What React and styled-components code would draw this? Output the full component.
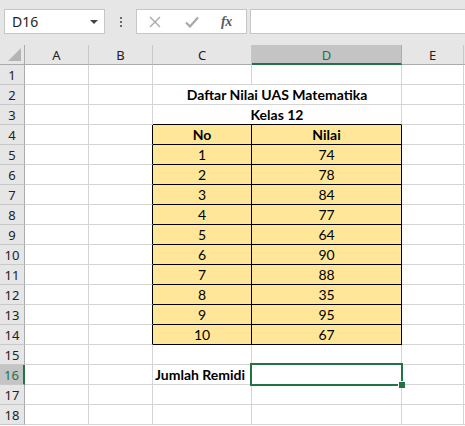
import React from 'react';
import styled, { createGlobalStyle } from 'styled-components';

const GREEN = '#217346';
const GRID = '#d4d4d4';

const Global = createGlobalStyle`
  html, body { margin: 0; padding: 0; background: #ffffff; }
  body { font-family: "Noto Sans", "DejaVu Sans", sans-serif; }
`;

const Window = styled.div`
  width: 465px;
  height: 426px;
  overflow: hidden;
  background: #e6e6e6;
  display: flex;
  flex-direction: column;
`;

const Toolbar = styled.div`
  height: 45px;
  flex: none;
  box-sizing: border-box;
  padding-top: 9px;
  display: flex;
  align-items: flex-start;
`;

const NameBox = styled.div`
  margin-left: 4px;
  width: 101px;
  height: 25px;
  box-sizing: border-box;
  background: #ffffff;
  border: 1px solid #c6c6c6;
  display: flex;
  align-items: center;
  justify-content: space-between;
  padding: 0 6px 0 7px;
  font-family: "Noto Sans", sans-serif;
  font-size: 14px;
  color: #1e1e1e;
`;

const Caret = styled.span`
  width: 0;
  height: 0;
  border-left: 4px solid transparent;
  border-right: 4px solid transparent;
  border-top: 4px solid #444;
  margin-top: 1px;
`;

const Dots = styled.div`
  width: 31px;
  height: 25px;
  display: flex;
  flex-direction: column;
  align-items: center;
  justify-content: center;
  gap: 2px;
`;

const Dot = styled.span`
  width: 2px;
  height: 2px;
  background: #6a6a6a;
`;

const ButtonBox = styled.div`
  width: 111px;
  height: 25px;
  box-sizing: border-box;
  background: #ffffff;
  border: 1px solid #c6c6c6;
  display: flex;
  align-items: center;
  padding-left: 12px;
`;

const IconSlot = styled.span`
  width: ${p => p.w}px;
  display: flex;
  align-items: center;
  justify-content: flex-start;
`;

const Fx = styled.span`
  font-family: "Liberation Serif", "DejaVu Serif", serif;
  font-style: italic;
  font-size: 14px;
  color: #5a5a5a;
  font-weight: bold;
  letter-spacing: -0.5px;
`;

const FormulaInput = styled.div`
  margin-left: 3px;
  flex: 1;
  height: 25px;
  box-sizing: border-box;
  background: #ffffff;
  border: 1px solid #c6c6c6;
  border-right: none;
`;

const Sheet = styled.div`
  flex: 1;
  display: grid;
  grid-template-columns: 25px 64px 64px 99px 150px 62px 1fr;
  grid-template-rows: 20px repeat(18, 20px);
  background: #ffffff;
`;

const Corner = styled.div`
  background: #e6e6e6;
  border-right: 1px solid #ababab;
  border-bottom: 1px solid #ababab;
  box-sizing: border-box;
  display: flex;
  align-items: flex-end;
  justify-content: flex-end;
  padding: 0 3px 3px 0;
`;

const ColHead = styled.div`
  box-sizing: border-box;
  background: ${p => (p.sel ? '#c4c4c4' : '#e6e6e6')};
  color: ${p => (p.sel ? GREEN : '#222')};
  border-right: 1px solid ${p => (p.sel ? '#ababab' : '#c8c8c8')};
  border-bottom: ${p => (p.sel ? `2px solid ${GREEN}` : '1px solid #ababab')};
  display: flex;
  align-items: center;
  justify-content: center;
  font-family: "Noto Sans", sans-serif;
  font-size: 13px;
  padding-top: ${p => (p.sel ? '1px' : '0')};
`;

const RowHead = styled.div`
  box-sizing: border-box;
  background: ${p => (p.sel ? '#c4c4c4' : '#e6e6e6')};
  color: ${p => (p.sel ? GREEN : '#222')};
  border-right: ${p => (p.sel ? `2px solid ${GREEN}` : '1px solid #ababab')};
  border-bottom: 1px solid #c8c8c8;
  display: flex;
  align-items: center;
  justify-content: center;
  font-family: "Noto Sans", sans-serif;
  font-size: 13px;
  padding-top: 1px;
`;

const Cell = styled.div`
  position: relative;
  box-sizing: border-box;
  grid-column: ${p => (p.span ? `span ${p.span}` : 'auto')};
  background: ${p => (p.fill ? '#ffe699' : '#ffffff')};
  border-right: 1px solid ${p => p.rc};
  border-bottom: 1px solid ${p => p.bc};
  display: flex;
  align-items: flex-end;
  justify-content: ${p => (p.align === 'left' ? 'flex-start' : 'center')};
  padding: 0 2px 0 2px;
  font-family: "Lato", "Noto Sans", sans-serif;
  font-size: 14px;
  line-height: 19px;
  font-weight: ${p => (p.bold ? 700 : 400)};
  color: #000;
  white-space: nowrap;
  overflow: visible;
`;

const Selection = styled.div`
  position: absolute;
  z-index: 2;
  left: -2px;
  top: -2px;
  width: 153px;
  height: 23px;
  box-sizing: border-box;
  border: 2px solid ${GREEN};
  pointer-events: none;
`;

const Handle = styled.span`
  position: absolute;
  right: -4px;
  bottom: -4px;
  width: 6px;
  height: 6px;
  background: ${GREEN};
  border-left: 1px solid #ffffff;
  border-top: 1px solid #ffffff;
`;

const cols = ['A', 'B', 'C', 'D', 'E', ''];
const values = [74, 78, 84, 77, 64, 90, 88, 35, 95, 67];

function cellProps(row, ci) {
  const inTable = row >= 4 && row <= 14;
  const rightBlack = inTable && (ci === 1 || ci === 2 || ci === 3);
  const bottomBlack = (ci === 2 || ci === 3) && row >= 3 && row <= 14;
  return {
    rc: rightBlack ? '#000' : GRID,
    bc: bottomBlack ? '#000' : GRID,
  };
}

function renderRow(row) {
  const cells = [];
  cells.push(
    <RowHead key={`h${row}`} sel={row === 16}>
      {row}
    </RowHead>
  );
  for (let ci = 0; ci < 6; ci++) {
    const p = cellProps(row, ci);
    const key = `${row}-${ci}`;
    if ((row === 2 || row === 3) && ci === 2) {
      cells.push(
        <Cell key={key} span={2} rc={GRID} bc={p.bc} bold>
          {row === 2 ? 'Daftar Nilai UAS Matematika' : 'Kelas 12'}
        </Cell>
      );
      ci++;
      continue;
    }
    let content = null;
    let bold = false;
    let fill = false;
    let align = 'center';
    if (row >= 4 && row <= 14 && (ci === 2 || ci === 3)) {
      fill = true;
      if (row === 4) {
        bold = true;
        content = ci === 2 ? 'No' : 'Nilai';
      } else {
        content = ci === 2 ? row - 4 : values[row - 5];
      }
    }
    if (row === 16 && ci === 2) {
      content = 'Jumlah Remidi';
      bold = true;
      align = 'left';
    }
    cells.push(
      <Cell key={key} {...p} bold={bold} fill={fill} align={align}>
        {content}
        {row === 16 && ci === 3 && (
          <Selection>
            <Handle />
          </Selection>
        )}
      </Cell>
    );
  }
  return cells;
}

export default function App() {
  const rows = [];
  for (let r = 1; r <= 18; r++) rows.push(...renderRow(r));
  return (
    <>
      <Global />
      <Window>
        <Toolbar>
          <NameBox>
            <span>D16</span>
            <Caret />
          </NameBox>
          <Dots>
            <Dot />
            <Dot />
            <Dot />
          </Dots>
          <ButtonBox>
            <IconSlot w={36}>
              <svg width="12" height="12" viewBox="0 0 12 12">
                <path d="M1 1 L11 11 M11 1 L1 11" stroke="#a8a8a8" strokeWidth="1.4" fill="none" />
              </svg>
            </IconSlot>
            <IconSlot w={36}>
              <svg width="14" height="12" viewBox="0 0 14 12">
                <path d="M1 6.5 L5 10.5 L13 1.5" stroke="#a8a8a8" strokeWidth="2.2" fill="none" />
              </svg>
            </IconSlot>
            <IconSlot w={24}>
              <Fx>fx</Fx>
            </IconSlot>
          </ButtonBox>
          <FormulaInput />
        </Toolbar>
        <Sheet>
          <Corner>
            <svg width="13" height="13" viewBox="0 0 13 13">
              <path d="M13 0 L13 13 L0 13 Z" fill="#b4b4b4" />
            </svg>
          </Corner>
          {cols.map((c, i) => (
            <ColHead key={`c${i}`} sel={c === 'D'}>
              {c}
            </ColHead>
          ))}
          {rows}
        </Sheet>
      </Window>
    </>
  );
}
